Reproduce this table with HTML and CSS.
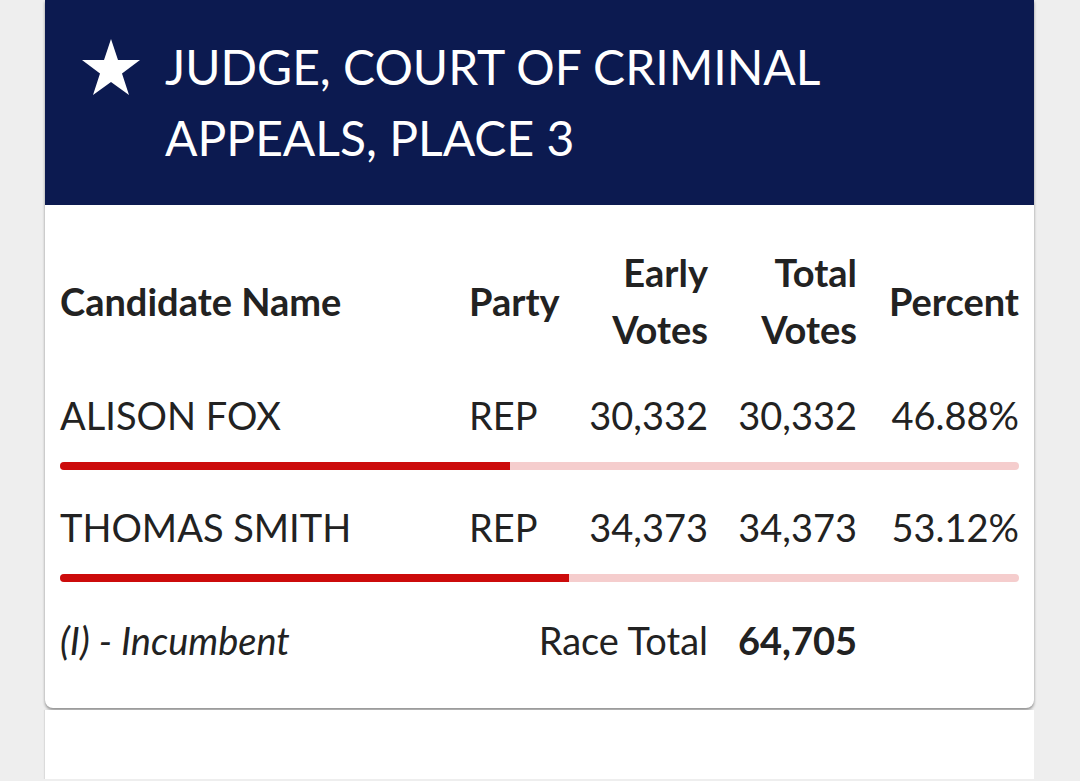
FILE: index.html
```html
<!DOCTYPE html>
<html lang="en">
<head>
<meta charset="utf-8">
<title>Judge, Court of Criminal Appeals, Place 3</title>
<link rel="stylesheet" href="styles.css">
</head>
<body>
<div class="page">
  <section class="race-card">
    <header class="race-header">
      <svg class="star" viewBox="0 0 60 60" aria-hidden="true">
        <polygon points="30,1 37,22 59,22 41,35.5 48,57 30,44 12,57 19,35.5 1,22 23,22" fill="#ffffff"/>
      </svg>
      <h1 class="race-title">JUDGE, COURT OF CRIMINAL APPEALS, PLACE 3</h1>
    </header>
    <div class="race-body">
      <div class="grid head-row">
        <div class="cell name">Candidate Name</div>
        <div class="cell party">Party</div>
        <div class="cell num">Early Votes</div>
        <div class="cell num">Total Votes</div>
        <div class="cell num">Percent</div>
      </div>

      <div class="candidate">
        <div class="grid">
          <div class="cell name">ALISON FOX</div>
          <div class="cell party">REP</div>
          <div class="cell num">30,332</div>
          <div class="cell num">30,332</div>
          <div class="cell num">46.88%</div>
        </div>
        <div class="bar"><div class="bar-fill" style="width:46.88%"></div></div>
      </div>

      <div class="candidate">
        <div class="grid">
          <div class="cell name">THOMAS SMITH</div>
          <div class="cell party">REP</div>
          <div class="cell num">34,373</div>
          <div class="cell num">34,373</div>
          <div class="cell num">53.12%</div>
        </div>
        <div class="bar"><div class="bar-fill" style="width:53.12%"></div></div>
      </div>

      <div class="grid foot-row">
        <div class="cell name incumbent">(I) - Incumbent</div>
        <div class="cell num race-label">Race Total</div>
        <div class="cell num race-total">64,705</div>
        <div class="cell"></div>
      </div>
    </div>
  </section>
  <section class="next-card"></section>
</div>
</body>
</html>
```

FILE: styles.css
```css
html, body {
  margin: 0;
  padding: 0;
}

body {
  background: #eeeeee;
  font-family: Lato, "Noto Sans", sans-serif;
  color: #222222;
  overflow: hidden;
}

.page {
  width: 989px;
  margin-left: 45px;
  display: flex;
  flex-direction: column;
}

.race-card {
  background: #ffffff;
  border-radius: 0 0 8px 8px;
  box-shadow: 0 2px 3px rgba(0, 0, 0, 0.4);
}

.race-header {
  background: #0c1a50;
  height: 205px;
  box-sizing: border-box;
  padding: 31px 20px 0 36px;
  display: flex;
  align-items: flex-start;
  gap: 24px;
}

.star {
  width: 60px;
  height: 60px;
  flex: none;
  margin-top: 7px;
}

.race-title {
  margin: 0;
  color: #ffffff;
  font-weight: 400;
  font-size: 48px;
  line-height: 71px;
  max-width: 700px;
}

.race-body {
  padding: 39px 15px 39px;
}

.grid {
  display: grid;
  grid-template-columns: 409px 109px 130px 149px 162px;
  align-items: center;
  font-size: 38px;
  line-height: 57px;
}

.head-row {
  font-weight: 700;
}

.cell.num {
  text-align: right;
}

.cell.party {
  text-align: left;
}

.candidate {
  margin-top: 29px;
}

.bar {
  margin-top: 18px;
  height: 8px;
  border-radius: 4px;
  background: #f5cdcd;
  overflow: hidden;
}

.bar-fill {
  height: 100%;
  background: #cc0b0b;
}

.foot-row {
  margin-top: 30px;
}

.incumbent {
  font-style: italic;
}

.race-label {
  grid-column: 2 / span 2;
}

.race-total {
  font-weight: 700;
}

.next-card {
  margin-top: 2px;
  height: 69px;
  background: #ffffff;
  box-shadow: -1px 0 1px rgba(0, 0, 0, 0.08);
}
```
